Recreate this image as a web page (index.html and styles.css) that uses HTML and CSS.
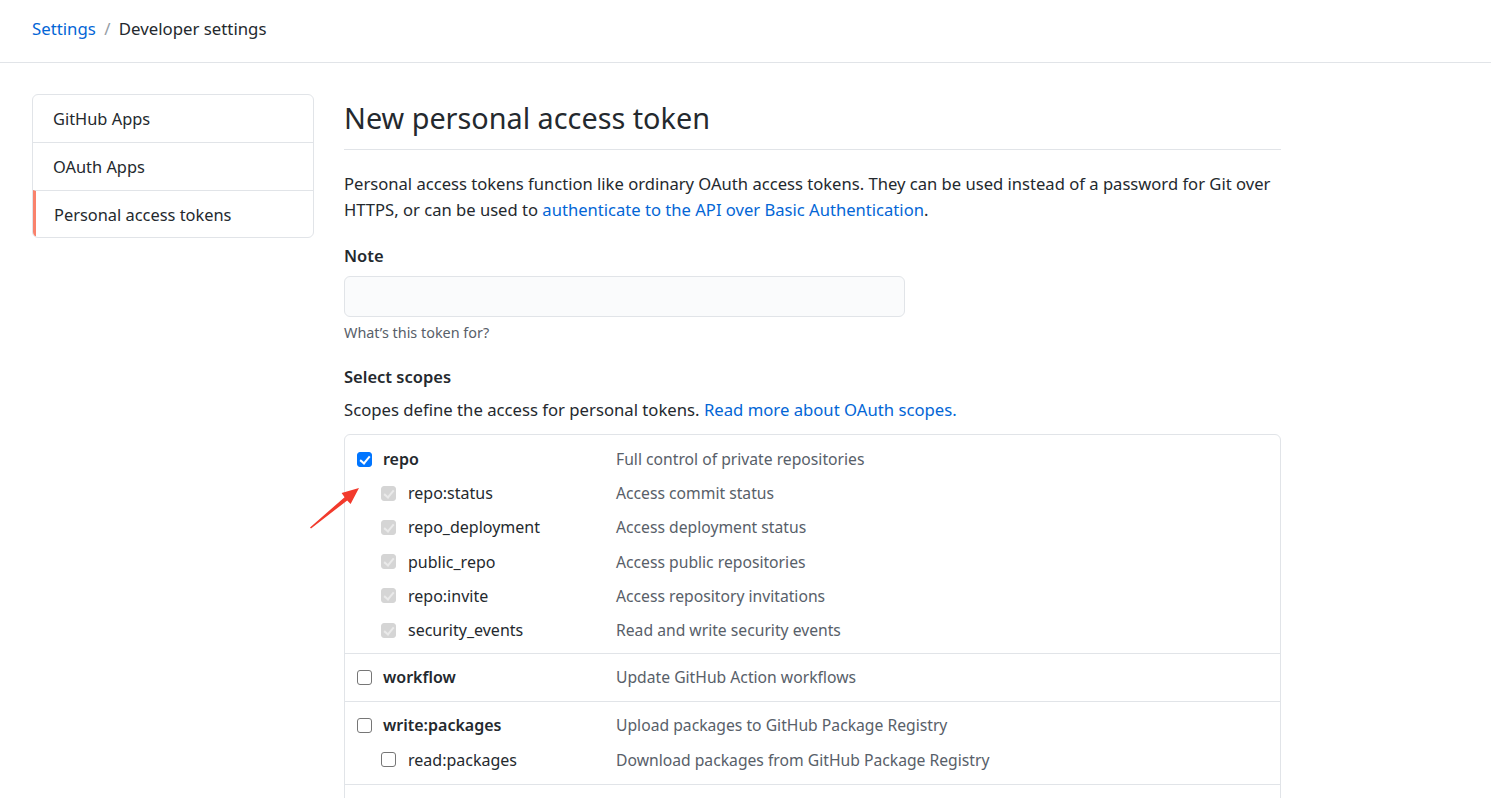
FILE: index.html
```html
<!DOCTYPE html>
<html>
<head>
<meta charset="utf-8">
<link rel="stylesheet" href="styles.css">
</head>
<body>
<header class="crumbs">
  <a class="link" href="#">Settings</a>
  <span class="sep">/</span>
  <span class="current">Developer settings</span>
</header>
<div class="page">
  <nav class="side">
    <a class="side-item" href="#">GitHub Apps</a>
    <a class="side-item" href="#">OAuth Apps</a>
    <a class="side-item selected" href="#">Personal access tokens</a>
  </nav>
  <main class="main">
    <h1 class="title">New personal access token</h1>
    <p class="intro">Personal access tokens function like ordinary OAuth access tokens. They can be used instead of a password for Git over HTTPS, or can be used to <a class="link" href="#">authenticate to the API over Basic Authentication</a>.</p>
    <label class="field-label">Note</label>
    <input class="note-input" type="text">
    <p class="hint">What’s this token for?</p>
    <h3 class="field-label scopes-title">Select scopes</h3>
    <p class="scopes-desc">Scopes define the access for personal tokens. <a class="link" href="#">Read more about OAuth scopes.</a></p>
    <div class="scopes">
      <div class="group">
        <div class="row top"><span class="cb checked"></span><span class="name">repo</span><span class="desc">Full control of private repositories</span></div>
        <div class="row sub"><span class="cb dim"></span><span class="name">repo:status</span><span class="desc">Access commit status</span></div>
        <div class="row sub"><span class="cb dim"></span><span class="name">repo_deployment</span><span class="desc">Access deployment status</span></div>
        <div class="row sub"><span class="cb dim"></span><span class="name">public_repo</span><span class="desc">Access public repositories</span></div>
        <div class="row sub"><span class="cb dim"></span><span class="name">repo:invite</span><span class="desc">Access repository invitations</span></div>
        <div class="row sub"><span class="cb dim"></span><span class="name">security_events</span><span class="desc">Read and write security events</span></div>
      </div>
      <div class="group">
        <div class="row top"><span class="cb"></span><span class="name">workflow</span><span class="desc">Update GitHub Action workflows</span></div>
      </div>
      <div class="group">
        <div class="row top"><span class="cb"></span><span class="name">write:packages</span><span class="desc">Upload packages to GitHub Package Registry</span></div>
        <div class="row sub"><span class="cb"></span><span class="name">read:packages</span><span class="desc">Download packages from GitHub Package Registry</span></div>
      </div>
      <div class="group empty"></div>
    </div>
  </main>
</div>
<svg class="arrow" width="60" height="50" viewBox="0 0 60 50">
  <path d="M5 44.5 L39.6 14.2 L36.6 10 L54 5 L45.6 21 L42.2 17.4 L6 45.5 Z" fill="#f23a2c"/>
</svg>
</body>
</html>
```

FILE: styles.css
```css
* { box-sizing: border-box; }
html, body { margin: 0; padding: 0; background: #fff; }
body {
  font-family: "Noto Sans", "Open Sans", sans-serif;
  color: #24292e;
  font-size: 16px;
  overflow: hidden;
  height: 798px;
  position: relative;
}
.link { color: #0366d6; text-decoration: none; }
.crumbs {
  height: 63px;
  border-bottom: 1px solid #e1e4e8;
  padding: 15px 0 0 32px;
  font-size: 16.8px;
  line-height: 28px;
}
.crumbs .sep { color: #959da5; margin: 0 4px; }
.page {
  display: flex;
  padding: 31px 0 0 32px;
  gap: 30px;
}
.side {
  width: 282px;
  flex: none;
  border: 1px solid #e1e4e8;
  border-radius: 6px;
  align-self: flex-start;
  display: flex;
  flex-direction: column;
  overflow: hidden;
}
.side-item {
  display: block;
  height: 47.3px;
  padding: 0 20px;
  line-height: 47px;
  color: #24292e;
  text-decoration: none;
  border-top: 1px solid #e1e4e8;
  font-size: 16.4px;
}
.side-item:first-child { border-top: none; }
.side-item.selected { border-left: 3px solid #f9826c; padding-left: 18px; }
.main { width: 937px; flex: none; }
.title {
  margin: 0;
  font-size: 28.8px;
  font-weight: 400;
  line-height: 48px;
  padding: 0 0 7px;
  border-bottom: 1px solid #e1e4e8;
}
.intro { margin: 21px 0 0; line-height: 26px; font-size: 16.6px; }
.field-label { display: block; font-weight: 600; margin: 21px 0 0; font-size: 16.5px; line-height: 24px; }
.note-input {
  display: block;
  width: 561px;
  height: 41px;
  margin-top: 8px;
  background: #fafbfc;
  border: 1px solid #e1e4e8;
  border-radius: 6px;
}
.hint { margin: 6px 0 0; font-size: 14.4px; color: #586069; line-height: 20px; }
.scopes-title { margin-top: 22px; }
.scopes-desc { margin: 9px 0 0; line-height: 24px; font-size: 16.7px; }
.scopes {
  margin-top: 12px;
  border: 1px solid #e1e4e8;
  border-radius: 6px;
}
.group { border-top: 1px solid #e1e4e8; padding: 6px 0 7px; }
.group:first-child { border-top: none; padding: 7px 0 6px; }
.group.empty { height: 30px; }
.row { display: flex; align-items: center; height: 34.2px; }
.row .cb {
  width: 15px; height: 15px;
  border: 1px solid #767676;
  border-radius: 3px;
  flex: none;
  background: #fff;
  position: relative;
}
.row.top .cb { margin-left: 12px; margin-right: 11px; }
.row.sub .cb { margin-left: 36px; margin-right: 12px; }
.cb.checked { background: #0075ff; border-color: #0075ff; }
.cb.checked::after, .cb.dim::after {
  content: "";
  position: absolute;
  left: 4px; top: 1px;
  width: 4px; height: 8px;
  border: solid #fff;
  border-width: 0 2px 2px 0;
  transform: rotate(40deg);
}
.cb.dim { background: #d5d5d5; border-color: #d5d5d5; }
.cb.dim::after { border-color: #eaeaea; }
.row .name { width: 208px; flex: none; }
.row.top .name { font-weight: 600; width: 233px; }
.row .desc { color: #586069; font-size: 15.7px; }
.arrow { position: absolute; left: 305px; top: 483px; }
```
